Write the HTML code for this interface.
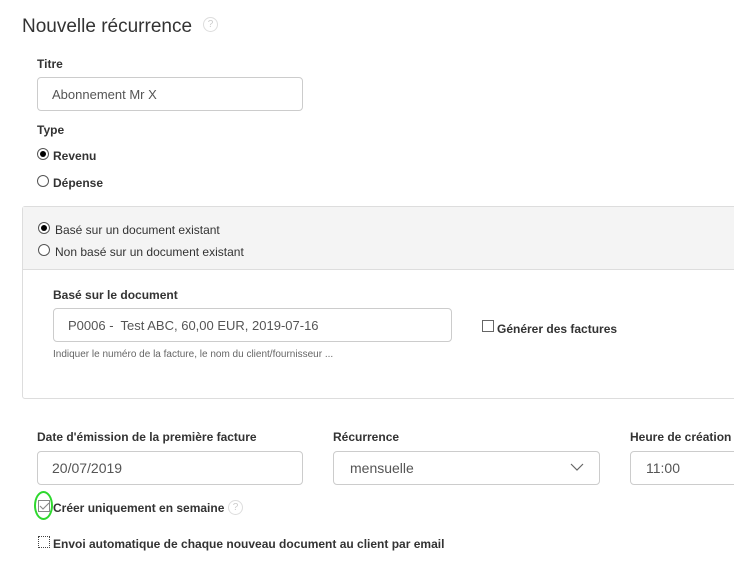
<!DOCTYPE html>
<html><head><meta charset="utf-8">
<style>
*{box-sizing:border-box;margin:0;padding:0}
body{width:734px;height:568px;background:#fff;font-family:"Liberation Sans",Arial,sans-serif;color:#333;position:relative;overflow:hidden}
.a{position:absolute;white-space:nowrap}
.lbl{font-size:12px;font-weight:bold;color:#333}
.inp{position:absolute;border:1px solid #ccc;border-radius:4px;background:#fff;font-size:14px;color:#555;padding-left:14px;display:flex;align-items:center}
.radio{position:absolute;width:12px;height:12px;border:1px solid #555;border-radius:50%;background:#fff}
.radio.on::after{content:"";position:absolute;left:2px;top:2px;width:6px;height:6px;border-radius:50%;background:#000}
.cb{position:absolute;width:12px;height:12px;border:1px solid #666;background:#fff}
.q{position:absolute;width:15px;height:15px;border:1px solid #ddd;border-radius:50%;color:#ccc;font-size:10px;text-align:center;line-height:13px}
.t12{font-size:12px;color:#333}
</style></head><body>
<div class="a" style="left:22px;top:16px;font-size:19px;color:#333">Nouvelle récurrence</div>
<div class="q" style="left:203px;top:17px">?</div>

<div class="a lbl" style="left:37px;top:57px">Titre</div>
<div class="inp" style="left:37px;top:77px;width:266px;height:34px;font-size:13px">Abonnement Mr X</div>

<div class="a lbl" style="left:37px;top:123px">Type</div>
<div class="radio on" style="left:37px;top:148px"></div>
<div class="a lbl" style="left:53px;top:149px">Revenu</div>
<div class="radio" style="left:37px;top:175px"></div>
<div class="a lbl" style="left:53px;top:176px">Dépense</div>

<div style="position:absolute;left:22px;top:206px;width:730px;height:193px;border:1px solid #ddd;border-radius:3px;background:#fff"></div>
<div style="position:absolute;left:23px;top:207px;width:711px;height:63px;background:#f4f4f4;border-bottom:1px solid #ddd"></div>
<div class="radio on" style="left:38px;top:222px"></div>
<div class="a t12" style="left:55px;top:223px">Basé sur un document existant</div>
<div class="radio" style="left:38px;top:244px"></div>
<div class="a t12" style="left:55px;top:245px">Non basé sur un document existant</div>

<div class="a lbl" style="left:53px;top:288px">Basé sur le document</div>
<div class="inp" style="left:53px;top:308px;width:399px;height:34px;font-size:13px;padding-left:14px">P0006 -&nbsp; Test ABC, 60,00 EUR, 2019-07-16</div>
<div class="a" style="left:53px;top:349px;font-size:10px;color:#666">Indiquer le numéro de la facture, le nom du client/fournisseur ...</div>
<div class="cb" style="left:482px;top:320px"></div>
<div class="a lbl" style="left:497px;top:322px">Générer des factures</div>

<div class="a lbl" style="left:37px;top:430px">Date d'émission de la première facture</div>
<div class="inp" style="left:37px;top:451px;width:266px;height:34px">20/07/2019</div>
<div class="a lbl" style="left:333px;top:430px">Récurrence</div>
<div class="inp" style="left:333px;top:451px;width:267px;height:34px;padding-left:16px">mensuelle</div>
<svg style="position:absolute;left:570px;top:463px" width="14" height="9"><path d="M1 1L7 7L13 1" stroke="#666" fill="none" stroke-width="1.2"/></svg>
<div class="a lbl" style="left:630px;top:430px">Heure de création</div>
<div class="inp" style="left:630px;top:451px;width:120px;height:34px;padding-left:15px">11:00</div>

<div class="cb" style="left:38px;top:500px;border-color:#888"></div>
<svg style="position:absolute;left:39px;top:502px" width="11" height="9"><path d="M1 4L4 7L10 1" stroke="#888" fill="none" stroke-width="1.1"/></svg>
<div style="position:absolute;left:34px;top:491px;width:19px;height:29px;border:2px solid #2ed82e;border-radius:50%"></div>
<div class="a lbl" style="left:53px;top:501px">Créer uniquement en semaine</div>
<div class="q" style="left:228px;top:500px">?</div>

<div class="cb" style="left:38px;top:536px;border-style:dotted;border-color:#444"></div>
<div class="a lbl" style="left:53px;top:537px">Envoi automatique de chaque nouveau document au client par email</div>
</body></html>
